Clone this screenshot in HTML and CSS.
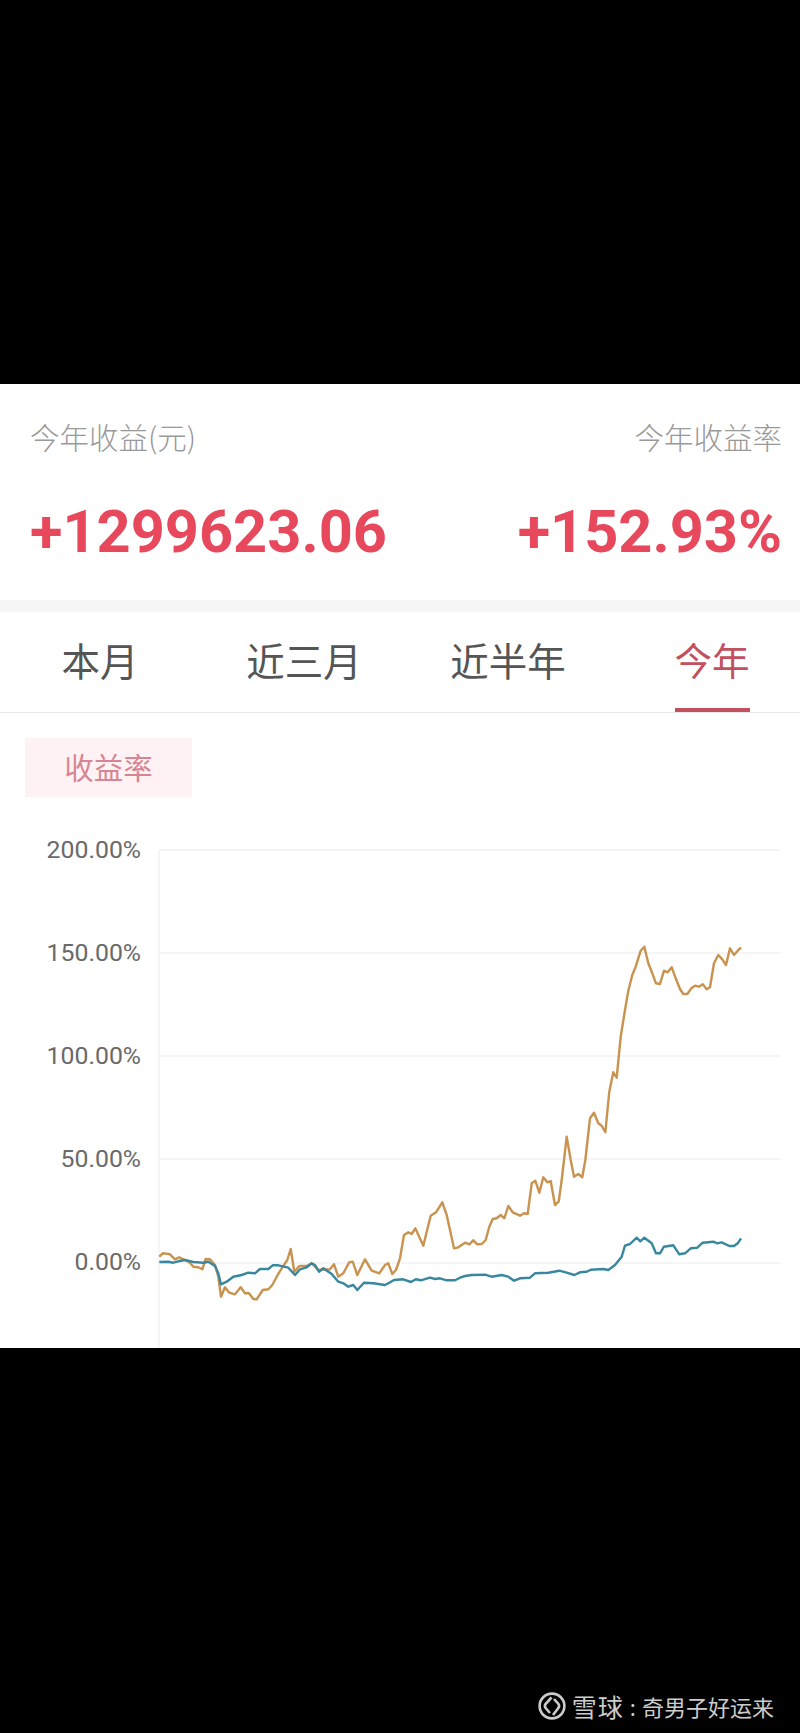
FILE: index.html
```html
<!DOCTYPE html>
<html lang="zh-CN">
<head>
<meta charset="UTF-8">
<meta name="viewport" content="width=device-width, initial-scale=1.0">
<title>今年收益</title>
<link rel="stylesheet" href="styles.css">
</head>
<body>

<div class="screen">
  <div class="black-top"></div>

  <div class="card">
    <div class="summary">
      <div class="stat">
        <div class="stat-label">今年收益(元)</div>
        <div class="stat-value">+1299623.06</div>
      </div>
      <div class="stat stat-right">
        <div class="stat-label">今年收益率</div>
        <div class="stat-value">+152.93%</div>
      </div>
    </div>
    <div class="band"></div>

    <div class="tabs">
      <div class="tab">本月</div>
      <div class="tab">近三月</div>
      <div class="tab">近半年</div>
      <div class="tab active">今年</div>
    </div>

    <div class="pill">收益率</div>

    <svg class="chart" viewBox="0 820 800 528" width="800" height="528">
      <line class="grid" x1="159" y1="850" x2="780" y2="850"/>
      <line class="grid" x1="159" y1="953" x2="780" y2="953"/>
      <line class="grid" x1="159" y1="1056" x2="780" y2="1056"/>
      <line class="grid" x1="159" y1="1159" x2="780" y2="1159"/>
      <line class="grid" x1="159" y1="1263" x2="780" y2="1263"/>
      <line class="grid" x1="159" y1="850" x2="159" y2="1348"/>

      <text class="tick" x="141" y="858">200.00%</text>
      <text class="tick" x="141" y="961">150.00%</text>
      <text class="tick" x="141" y="1064">100.00%</text>
      <text class="tick" x="141" y="1167">50.00%</text>
      <text class="tick" x="141" y="1270">0.00%</text>

      <polyline class="line-orange" points="159.3,1256.7 162.7,1253.3 170,1254.3 175,1259.3 179.3,1257.3 185,1260 190,1262.7 193.3,1266.7 198.3,1267.3 202.3,1269.3 205.7,1259 210,1259.3 215,1265 218.3,1276.7 221,1296.7 225,1287.3 229.3,1292.7 235,1294.3 240.7,1287.3 245,1293.3 249,1293.3 253.3,1299 256.7,1299.3 262.7,1290 268.3,1289.3 272.3,1285 276.7,1276.7 281.7,1268.3 287.3,1260 290.7,1249 294.3,1271.7 299.3,1266 306.7,1266 311.7,1263.3 318.3,1270 330,1269.3 334,1264.3 338.3,1276.7 343.3,1273.3 349.3,1262.3 352.7,1261.7 357.3,1275 365,1259.3 371.7,1270.7 379.3,1273.3 385,1265 388.3,1263.3 392.3,1274 396,1270 400,1258.3 404,1235 408.3,1232.3 411.7,1234 415.3,1228.3 423.3,1245.7 430.7,1215.7 436,1212.3 442.3,1202.3 446.7,1215 454,1248.3 458.3,1247.3 465,1242.7 469.3,1244.3 473.3,1240.3 477.3,1244.3 481.7,1244 485.7,1240 489.3,1226.7 492.7,1219 496.7,1218.3 500.7,1215 504.3,1218.3 508.3,1206 512.7,1212.3 520,1215.7 524,1213.3 527.7,1214 531.7,1183.3 535.3,1180.7 539.3,1192.7 543.3,1177.3 547.3,1182.3 550.7,1181 555,1205 558.7,1201.7 561.7,1180 566.7,1136.7 570.7,1160 574,1176.7 578.3,1174 582.3,1177.3 585.3,1160 590,1118.3 594,1112.7 598.3,1123.3 601.7,1125.7 605.3,1132.3 609.3,1091.7 613.3,1072.3 616.7,1077.7 620.7,1036.7 625,1010 628.3,990.7 632.3,975 635.7,966.7 640.7,950.7 644.3,946.7 648.3,963.3 652.3,973.3 656,983.3 660,984 664,970.7 667.7,972.3 671.7,967.3 675.7,978.3 680,989 683.3,994 687.3,994 691.3,988.3 695,985.7 699,986.7 702.7,984.3 706.7,989.3 710,987.3 714,963.3 718.3,955 722.3,959.3 726,965 730,948.3 734,955 738.3,950 741,947.7"/>
      <polyline class="line-blue" points="159.3,1262 168.3,1261.7 173.3,1262.7 178.3,1261.3 185,1260 193.3,1262 203.3,1262.7 208.3,1261.7 215,1266 218.3,1273.3 221,1284.3 226.7,1281.7 233.3,1276.7 241.7,1275 248.3,1272.7 255,1273.3 260,1269 268.3,1269 272.7,1265.3 278.3,1265.3 288.3,1267.7 295,1275 300,1269.3 306.7,1267.3 311.7,1263.3 315,1265 319,1271.7 323.3,1268.3 331.7,1274 338.3,1281.7 343.3,1283.3 348.3,1286.7 353.3,1285 357.3,1290 364,1282.7 373.3,1283.3 385,1285 389.3,1282.7 394,1280 403.3,1279.3 411,1282 415.7,1279.3 420.7,1280.3 430,1277.7 435,1279 440,1278.3 446.7,1280.3 455,1280.3 460,1277.7 465,1276 471.7,1275 485,1274.7 491.7,1276.7 501.7,1275 508.3,1276.7 514,1280.7 520,1278.3 530,1277.7 535,1273.3 548.3,1272.7 559.3,1270.7 566.7,1272.7 574.3,1275 580,1272.3 586.7,1271.7 590.7,1269.7 603.3,1269 608.3,1270 615,1265 621.7,1256.7 625,1245.7 630,1244 636.7,1237.7 640.3,1241.3 644.3,1237.7 651.7,1243.3 656,1253.3 660,1253.3 664,1246.7 673.3,1245.3 679.3,1254.3 685,1253.3 690.7,1248.3 697.3,1247.7 702.7,1242.7 713.3,1241.7 717.3,1243.3 721.7,1242.3 729.3,1246 734,1246 737.7,1243.3 741,1238.3"/>
    </svg>
  </div>

  <div class="footer">
    <svg class="logo" viewBox="0 0 28 28" width="28" height="28">
      <circle cx="14" cy="14" r="12.4"/>
      <path d="M13.5 5.5L7.5 12Q6 14 8 16.5L12 21"/>
      <path d="M16 7L20.5 12Q22 14 20 16.5L15 23"/>
    </svg>
    <span class="brand">雪球</span>
    <span class="colon">:</span>
    <span class="author">奇男子好运来</span>
  </div>
</div>

</body>
</html>
```

FILE: styles.css
```css
body {
  margin: 0;
  background: #000;
  font-family: "Noto Sans CJK SC", "Liberation Sans", sans-serif;
}

.screen {
  width: 800px;
  height: 1733px;
  overflow: hidden;
  display: flex;
  flex-direction: column;
}

.black-top {
  height: 384px;
  flex: none;
}

.card {
  height: 964px;
  flex: none;
  background: #fff;
}

.summary {
  height: 216px;
  padding: 0 18px 0 30px;
  display: flex;
  justify-content: space-between;
}

.stat-right {
  text-align: right;
}

.stat-label {
  margin-top: 30px;
  font-size: 29.5px;
  line-height: 44px;
  font-weight: 300;
  color: #999;
}

.stat-value {
  margin-top: 37px;
  font-family: Roboto, "Liberation Sans", sans-serif;
  font-size: 59.5px;
  line-height: 74px;
  font-weight: 700;
  color: #e8485c;
}

.band {
  height: 12px;
  background: #f6f6f6;
}

.tabs {
  display: grid;
  grid-template-columns: repeat(4, 204px);
  margin-left: -2px;
  height: 100px;
  border-bottom: 1px solid #e8e8e8;
}

.tab {
  justify-self: center;
  height: 96px;
  padding-top: 5px;
  font-size: 38.5px;
  line-height: 84px;
  color: #555;
}

.tab.active {
  color: #c2505f;
  border-bottom: 4px solid #c2505f;
  height: 91px;
  font-size: 37.5px;
}

.pill {
  width: 167px;
  height: 59px;
  margin: 25px 0 0 25px;
  background: #fef2f4;
  color: #d88593;
  font-size: 29.5px;
  line-height: 56px;
  text-align: center;
}

.chart {
  display: block;
  margin-top: 23px;
}

.grid {
  stroke: #f5f5f6;
  stroke-width: 2;
}

.tick {
  font-family: Roboto, "Liberation Sans", sans-serif;
  font-size: 24.8px;
  fill: #6a6a6a;
  text-anchor: end;
}

.line-orange,
.line-blue {
  fill: none;
  stroke-width: 2.4;
  stroke-linejoin: round;
}

.line-orange {
  stroke: #c9924f;
}

.line-blue {
  stroke: #38879f;
}

.footer {
  display: flex;
  align-items: center;
  justify-content: flex-end;
  height: 50px;
  margin-top: 333px;
  padding-right: 26px;
  color: #ccc;
}

.logo {
  margin-right: 6px;
}

.logo circle,
.logo path {
  fill: none;
  stroke: #ccc;
  stroke-width: 2.6;
}

.brand {
  font-size: 25px;
  letter-spacing: 1px;
}

.colon {
  margin: 0 6px;
  font-size: 22px;
}

.author {
  font-size: 22px;
}
```
